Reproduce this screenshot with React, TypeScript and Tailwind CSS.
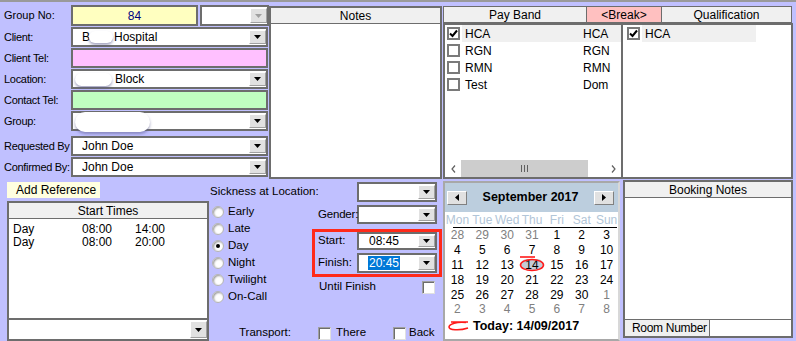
import React from "react";

function Arrow({ disabled }: { disabled?: boolean }) {
  return (
    <svg width="7" height="4" viewBox="0 0 7 4">
      <polygon points="0,0 7,0 3.5,4" fill={disabled ? "#a0a0a0" : "#000"} />
    </svg>
  );
}

function DropBtn({ disabled }: { disabled?: boolean }) {
  return (
    <div className="w-[17px] my-[1px] shrink-0 flex items-center justify-center bg-[#e1e1e1] border border-white border-r-[#a0a0a0] border-b-[#a0a0a0]">
      <Arrow disabled={disabled} />
    </div>
  );
}

function Combo({
  className = "",
  children,
  disabled,
}: {
  className?: string;
  children?: React.ReactNode;
  disabled?: boolean;
}) {
  return (
    <div className={`flex items-stretch bg-white border-2 border-[#6d6d6d] ${className}`}>
      <div className="flex-1 flex items-center min-w-0 whitespace-nowrap">{children}</div>
      <DropBtn disabled={disabled} />
    </div>
  );
}

function Row({
  label,
  children,
  className = "",
}: {
  label: string;
  children: React.ReactNode;
  className?: string;
}) {
  return (
    <div className={`flex h-[20px] ${className}`}>
      <div className="w-[67px] flex items-center whitespace-nowrap tracking-[-0.3px] relative z-10">{label}</div>
      {children}
    </div>
  );
}

function Check({ checked, className = "" }: { checked?: boolean; className?: string }) {
  return (
    <div
      className={`w-[13px] h-[13px] shrink-0 bg-white border-2 border-[#7a7a7a] flex items-center justify-center ${className}`}
    >
      {checked && (
        <svg width="9" height="9" viewBox="0 0 9 9">
          <path d="M1 4.5 L3.5 7 L8 1.5" stroke="#000" strokeWidth="2" fill="none" />
        </svg>
      )}
    </div>
  );
}

function SmallCheck({ className = "" }: { className?: string }) {
  return (
    <div
      className={`w-[13px] h-[13px] shrink-0 bg-white border border-[#a0a0a0] border-r-[#e0e0e0] border-b-[#e0e0e0] shadow-[inset_1px_1px_0_#6d6d6d] ${className}`}
    />
  );
}

function Radio({ label, checked }: { label: string; checked?: boolean }) {
  return (
    <div className="flex items-center h-[17px]">
      <div className="w-[12px] h-[12px] rounded-full bg-white border border-[#b4b4b4] shadow-[inset_1px_1px_2px_#9a9a9a] flex items-center justify-center">
        {checked && <div className="w-[4px] h-[4px] rounded-full bg-black" />}
      </div>
      <span className="ml-[4px]">{label}</span>
    </div>
  );
}

function Blob({ className = "" }: { className?: string }) {
  return (
    <span
      className={`inline-block rounded-full bg-white shadow-[0_2px_3px_rgba(90,90,140,0.55)] blur-[0.4px] ${className}`}
    />
  );
}

const pay: [string, string, boolean][] = [
  ["HCA", "HCA", true],
  ["RGN", "RGN", false],
  ["RMN", "RMN", false],
  ["Test", "Dom", false],
];

const weeks: number[][] = [
  [28, 29, 30, 31, 1, 2, 3],
  [4, 5, 6, 7, 8, 9, 10],
  [11, 12, 13, 14, 15, 16, 17],
  [18, 19, 20, 21, 22, 23, 24],
  [25, 26, 27, 28, 29, 30, 1],
  [2, 3, 4, 5, 6, 7, 8],
];

function isGray(w: number, d: number) {
  if (w === 0 && d < 4) return true;
  if (w === 4 && d === 6) return true;
  if (w === 5) return true;
  return false;
}

const days = ["Mon", "Tue", "Wed", "Thu", "Fri", "Sat", "Sun"];

export default function App() {
  return (
    <div className="w-[796px] h-[341px] overflow-hidden bg-[#c0c0ff] border-t-2 border-[#9a9a9a] text-[11px] leading-none text-black font-['Liberation_Sans',Arial,sans-serif]">
      {/* TOP */}
      <div className="flex h-[177px]">
        {/* Left form */}
        <div className="w-[269px] pl-[4px] pt-[3px] flex flex-col gap-[1px]">
          <div className="flex h-[21px]">
            <div className="w-[67px] flex items-center">Group No:</div>
            <div className="w-[127px] bg-[#ffffc0] border-2 border-[#6d6d6d] flex items-center justify-center text-[#000080] text-[12px]">
              84
            </div>
            <Combo className="w-[69px] ml-[2px]" disabled />
          </div>
          <Row label="Client:">
            <Combo className="w-[197px]">
              <span className="ml-[9px] text-[12px]">B</span>
              <Blob className="w-[24px] h-[12px] -ml-[1px]" />
              <span className="ml-[1px] text-[12px]">Hospital</span>
            </Combo>
          </Row>
          <Row label="Client Tel:">
            <div className="w-[197px] bg-[#ffc0ff] border-2 border-[#6d6d6d]" />
          </Row>
          <Row label="Location:">
            <Combo className="w-[197px]">
              <Blob className="w-[37px] h-[13px] ml-[2px]" />
              <span className="ml-[3px] text-[12px]">Block</span>
            </Combo>
          </Row>
          <Row label="Contact Tel:">
            <div className="w-[197px] bg-[#c0ffc0] border-2 border-[#6d6d6d]" />
          </Row>
          <Row label="Group:">
            <Combo className="w-[197px]">
              <Blob className="w-[75px] h-[20px] ml-[2px] mt-[2px]" />
            </Combo>
          </Row>
          <Row label="Requested By" className="mt-[4px]">
            <Combo className="w-[197px]">
              <span className="ml-[9px] text-[12px]">John Doe</span>
            </Combo>
          </Row>
          <Row label="Confirmed By:">
            <Combo className="w-[197px]">
              <span className="ml-[9px] text-[12px]">John Doe</span>
            </Combo>
          </Row>
        </div>

        {/* Notes */}
        <div className="w-[173px] mt-[4px] flex flex-col bg-white border-2 border-[#6d6d6d]">
          <div className="h-[16px] bg-[#f0f0f0] border-b border-[#6d6d6d] flex items-center justify-center text-[12px]">
            Notes
          </div>
        </div>

        {/* Pay band + Qualification */}
        <div className="w-[350px] ml-[1px] mt-[4px] flex flex-col">
          <div className="flex h-[17px] text-[12px]">
            <div className="w-[144px] bg-[#f0f0f0] border border-[#6d6d6d] flex items-center justify-center">
              Pay Band
            </div>
            <div className="w-[74px] bg-[#ffc0c0] border-y border-[#6d6d6d] flex items-center justify-center">
              &lt;Break&gt;
            </div>
            <div className="w-[131px] bg-[#f0f0f0] border border-[#6d6d6d] flex items-center justify-center">
              Qualification
            </div>
          </div>
          <div className="flex flex-1">
            <div className="w-[180px] bg-white border-2 border-[#6d6d6d] flex flex-col">
              <div className="flex-1 flex flex-col text-[12px]">
                {pay.map(([a, b, c]) => (
                  <div key={a} className="flex items-center h-[17px]">
                    <Check checked={c} className="ml-[2px]" />
                    <div
                      className={`flex-1 h-full flex items-center ml-[2px] pl-[3px] ${c ? "bg-[#f0f0f0]" : ""}`}
                    >
                      <span className="w-[118px]">{a}</span>
                      <span>{b}</span>
                    </div>
                  </div>
                ))}
              </div>
              <div className="h-[17px] flex bg-white">
                <div className="w-[16px] flex items-center justify-center">
                  <svg width="5" height="8" viewBox="0 0 5 8">
                    <path d="M4 0.5 L1 4 L4 7.5" stroke="#606060" strokeWidth="1.2" fill="none" />
                  </svg>
                </div>
                <div className="w-[127px] bg-[#cdcdcd] flex items-center justify-center gap-[2px]">
                  <div className="w-[1px] h-[7px] bg-[#606060]" />
                  <div className="w-[1px] h-[7px] bg-[#606060]" />
                  <div className="w-[1px] h-[7px] bg-[#606060]" />
                </div>
                <div className="flex-1" />
                <div className="w-[16px] flex items-center justify-center">
                  <svg width="5" height="8" viewBox="0 0 5 8">
                    <path d="M1 0.5 L4 4 L1 7.5" stroke="#606060" strokeWidth="1.2" fill="none" />
                  </svg>
                </div>
              </div>
            </div>
            <div className="w-[170px] bg-white border-2 border-l-0 border-[#6d6d6d] flex flex-col text-[12px]">
              <div className="flex items-center h-[17px]">
                <Check checked className="ml-[4px]" />
                <div className="w-[114px] h-full flex items-center ml-[2px] pl-[3px] bg-[#f0f0f0]">
                  HCA
                </div>
              </div>
            </div>
          </div>
        </div>
      </div>

      {/* BOTTOM */}
      <div className="flex h-[162px]">
        {/* Start times */}
        <div className="w-[209px] pl-[7px] flex flex-col">
          <div className="mt-[3px] w-[93px] h-[16px] bg-[#ffffe0] flex items-center pl-[9px] text-[12px]">
            Add Reference
          </div>
          <div className="mt-[3px] w-[202px] h-[119px] bg-white border-2 border-[#6d6d6d] flex flex-col">
            <div className="h-[16px] bg-[#f0f0f0] border-b border-[#6d6d6d] flex items-center justify-center text-[12px]">
              Start Times
            </div>
            <div className="pt-[3px] text-[12px]">
              {[
                ["Day", "08:00", "14:00"],
                ["Day", "08:00", "20:00"],
              ].map((r, i) => (
                <div key={i} className="flex h-[13.5px] items-center">
                  <span className="w-[73px] pl-[4px]">{r[0]}</span>
                  <span className="w-[53px]">{r[1]}</span>
                  <span>{r[2]}</span>
                </div>
              ))}
            </div>
          </div>
          <Combo className="w-[202px] h-[21px] border-t-0" />
        </div>

        {/* Middle */}
        <div className="w-[234px] flex flex-col">
          <div className="flex items-center h-[20px] mt-[3px]">
            <span className="ml-[1px] text-[11.5px]">Sickness at Location:</span>
            <Combo className="ml-auto mr-[6px] w-[80px] h-[20px]" />
          </div>
          <div className="flex">
            <div className="w-[103px] pl-[3px] pt-[1px] flex flex-col text-[11.5px]">
              <Radio label="Early" />
              <Radio label="Late" />
              <Radio label="Day" checked />
              <Radio label="Night" />
              <Radio label="Twilight" />
              <Radio label="On-Call" />
            </div>
            <div className="w-[130px] flex flex-col text-[11.5px]">
              <div className="flex h-[19px] mt-[3px]">
                <div className="w-[45px] pl-[6px] flex items-center whitespace-nowrap relative z-10 tracking-[-0.2px]">
                  Gender:
                </div>
                <Combo className="w-[80px]" />
              </div>
              <div className="mt-[5px] w-[130px] h-[48px] border-[3px] border-[#ff2a1a] flex flex-col">
                <div className="flex h-[18px]">
                  <div className="w-[42px] pl-[3px] flex items-center">Start:</div>
                  <Combo className="w-[80px]">
                    <span className="ml-[10px] text-[12px]">08:45</span>
                  </Combo>
                </div>
                <div className="flex h-[20px] mt-[3px]">
                  <div className="w-[42px] pl-[3px] flex items-center">Finish:</div>
                  <Combo className="w-[80px]">
                    <span className="ml-[9px] bg-[#0078d7] text-white text-[12px] px-[1px] py-[1px]">20:45</span>
                  </Combo>
                </div>
              </div>
              <div className="flex items-center h-[18px] mt-[1px]">
                <span className="pl-[7px]">Until Finish</span>
                <SmallCheck className="ml-auto mr-[7px]" />
              </div>
            </div>
          </div>
          <div className="mt-auto h-[16px] flex items-center text-[11.5px]">
            <span className="w-[109px] pl-[30px]">Transport:</span>
            <SmallCheck />
            <span className="ml-[5px] w-[57px]">There</span>
            <SmallCheck />
            <span className="ml-[3px]">Back</span>
          </div>
        </div>

        {/* Calendar */}
        <div className="w-[177px] h-[160px] mt-[2px] bg-white border-2 border-[#a8a8a8] border-r-[#d8d8d8] flex flex-col">
          <div className="h-[29px] bg-[#bccede] flex items-center">
            <div className="ml-[2px] w-[20px] h-[14px] bg-[#e1e1e1] border border-white border-r-[#808080] border-b-[#808080] flex items-center justify-center">
              <svg width="4" height="7" viewBox="0 0 4 7">
                <polygon points="4,0 0,3.5 4,7" fill="#000" />
              </svg>
            </div>
            <div className="flex-1 text-center font-bold text-[12.5px]">September 2017</div>
            <div className="mr-[4px] w-[20px] h-[14px] bg-[#e1e1e1] border border-white border-r-[#808080] border-b-[#808080] flex items-center justify-center">
              <svg width="4" height="7" viewBox="0 0 4 7">
                <polygon points="0,0 4,3.5 0,7" fill="#000" />
              </svg>
            </div>
          </div>
          <div className="grid grid-cols-7 w-[174px] h-[15px] items-center text-[12px] text-[#b2c6d8]">
            {days.map((d) => (
              <div key={d} className="text-center">
                {d}
              </div>
            ))}
          </div>
          <div className="h-[1px] bg-black ml-[8px] mr-[1px]" />
          <div className="flex flex-col text-[12px]">
            {weeks.map((w, wi) => (
              <div key={wi} className="grid grid-cols-7 w-[174px] h-[14.8px] items-center">
                {w.map((d, di) => (
                  <div
                    key={di}
                    className={`text-center ${isGray(wi, di) ? "text-[#808080]" : "text-black"}`}
                  >
                    {wi === 2 && di === 3 ? (
                      <span className="relative inline-flex items-center justify-center w-[22px] h-[11px] rounded-full bg-[#c4ccd6]">
                        14
                        <svg
                          className="absolute left-[-2px] top-[-4px]"
                          width="26"
                          height="17"
                          viewBox="0 0 26 17"
                        >
                          <path d="M1 2 H16" stroke="#ff1a1a" strokeWidth="1.6" fill="none" />
                          <ellipse cx="13" cy="10" rx="11.5" ry="5.5" stroke="#ff1a1a" strokeWidth="1.6" fill="none" />
                        </svg>
                      </span>
                    ) : (
                      d
                    )}
                  </div>
                ))}
              </div>
            ))}
          </div>
          <div className="flex items-center mt-[3px] ml-[2px]">
            <svg width="24" height="12" viewBox="0 0 24 12">
              <path
                d="M4 2 H21 M19 2.5 C10 1.5 2 4 2 7 C2 10 12 11 21 8"
                stroke="#ff1a1a"
                strokeWidth="1.6"
                fill="none"
              />
            </svg>
            <span className="ml-[2px] font-bold text-[12.5px]">Today: 14/09/2017</span>
          </div>
        </div>

        {/* Booking notes */}
        <div className="w-[170px] h-[158px] mt-[1px] ml-[3px] bg-white border-2 border-[#6d6d6d] flex flex-col">
          <div className="h-[16px] bg-[#f0f0f0] border-b border-[#6d6d6d] flex items-center justify-center text-[12px]">
            Booking Notes
          </div>
          <div className="flex-1" />
          <div className="h-[17px] flex border-t border-[#6d6d6d] text-[12px]">
            <div className="w-[85px] bg-[#f0f0f0] border-r border-[#6d6d6d] flex items-center pl-[7px] whitespace-nowrap tracking-[-0.3px]">
              Room Number
            </div>
          </div>
        </div>
      </div>
    </div>
  );
}
